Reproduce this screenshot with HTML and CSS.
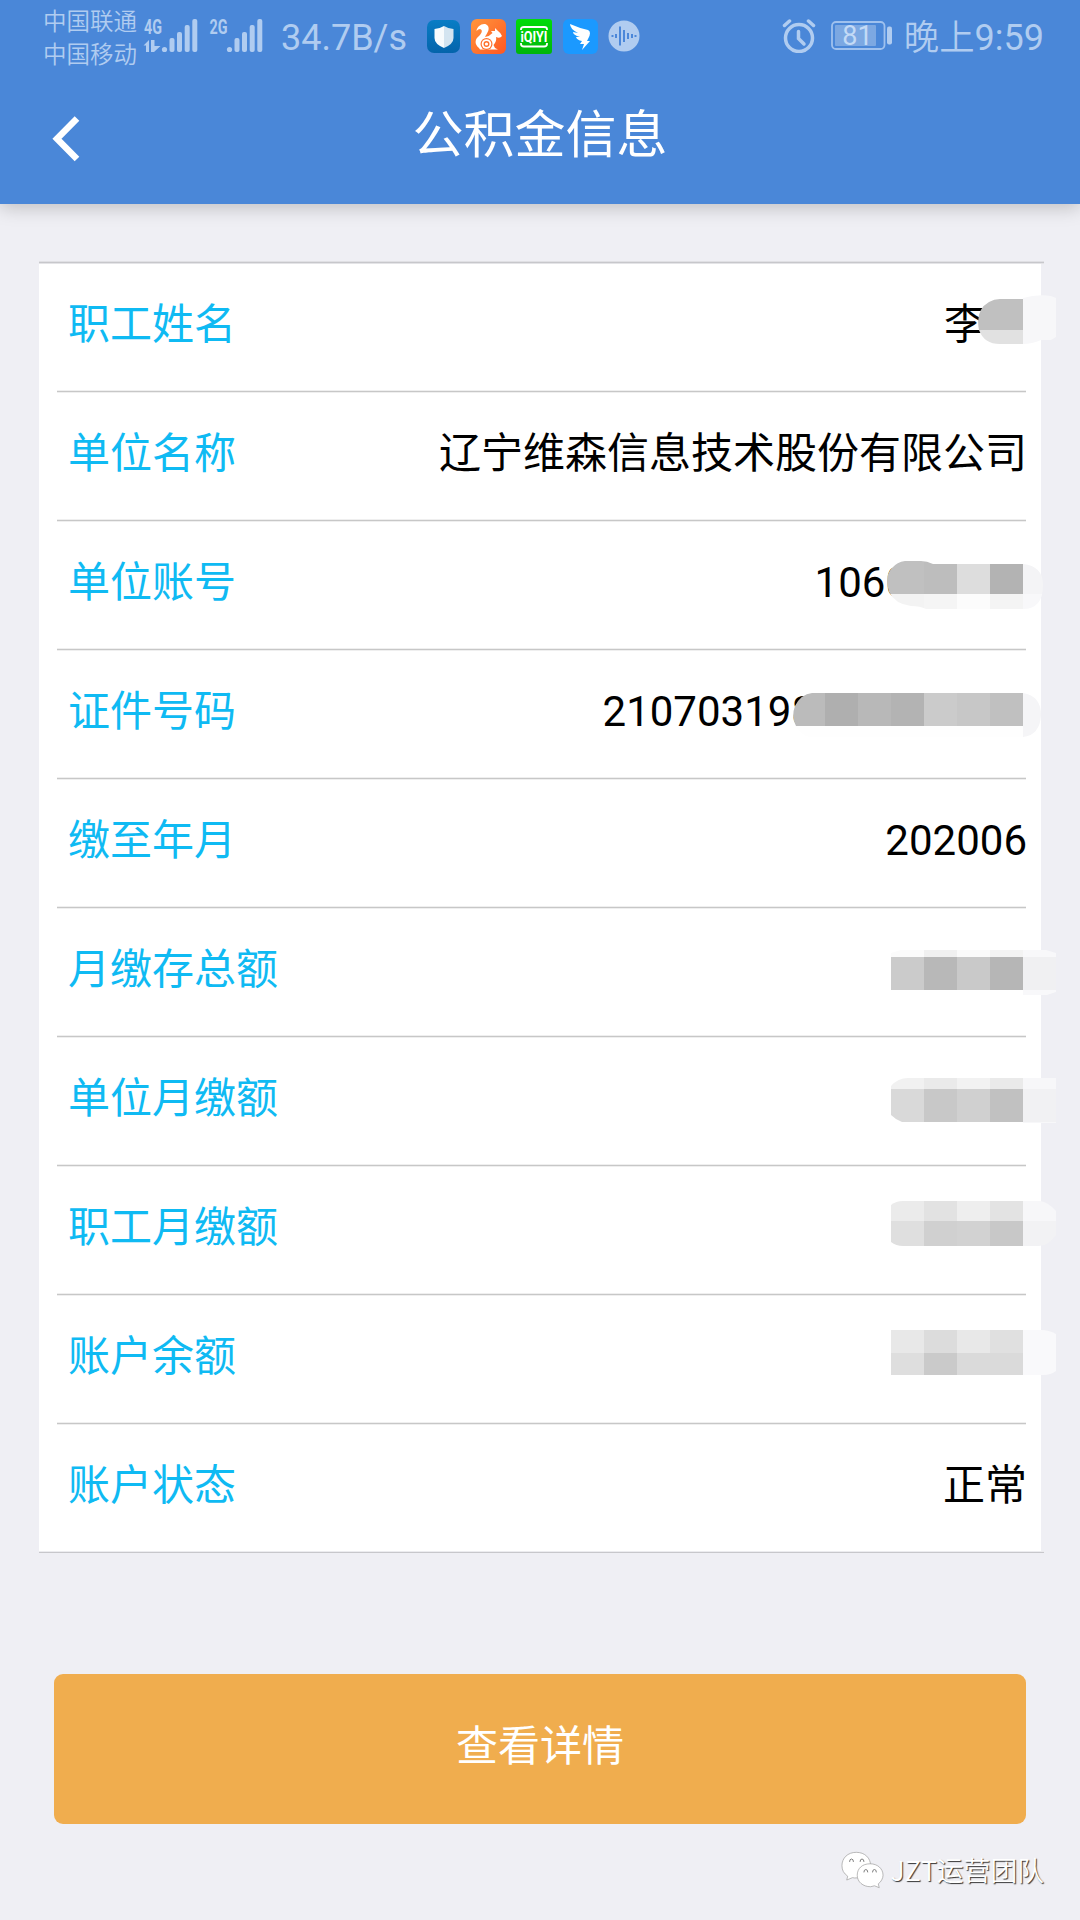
FILE: index.html
```html
<!DOCTYPE html>
<html lang="zh-CN">
<head>
<meta charset="utf-8">
<title>公积金信息</title>
<link rel="stylesheet" href="styles.css">
</head>
<body>
<header class="header">
  <div class="status">
    <div class="carriers"><span>中国联通</span><span>中国移动</span></div>
    <svg class="signal" width="120" height="48" viewBox="143 12 120 48">
      <text class="net" x="144" y="34" textLength="18" lengthAdjust="spacingAndGlyphs">4G</text>
      <text class="net" x="209.500" y="34" textLength="18" lengthAdjust="spacingAndGlyphs">2G</text>
      <path d="M143.500 45.500l5.500-5.500v12h-3v-6.500zM151 40h3.500v6h6l-6.500 6h-3z"/>
      <g>
        <circle cx="164.500" cy="49.500" r="2.600"/><rect x="169.500" y="38" width="5" height="14" rx="2"/><rect x="177" y="32" width="5" height="20" rx="2"/><rect x="184.700" y="25" width="5" height="27" rx="2"/><rect x="192.300" y="19" width="5" height="33" rx="2"/>
      </g>
      <g>
        <circle cx="229.500" cy="49.500" r="2.600"/><rect x="234.500" y="38" width="5" height="14" rx="2"/><rect x="242" y="32" width="5" height="20" rx="2"/><rect x="249.700" y="25" width="5" height="27" rx="2"/><rect x="257.300" y="19" width="5" height="33" rx="2"/>
      </g>
    </svg>
    <span class="speed">34.7B/s</span>
    <div class="apps">
      <svg width="33" height="33" viewBox="0 0 33 33">
        <defs><linearGradient id="navy" x2="0" y2="1"><stop stop-color="#087dc5"/><stop offset="1" stop-color="#0464ab"/></linearGradient></defs>
        <rect width="33" height="33" rx="7" fill="url(#navy)"/>
        <path d="M17 6q5 3 9.500 3v9q0 6-9.500 10z" fill="#d3e4f0"/><path d="M17 6q-5 3-9.500 3v9q0 6 9.500 10z" fill="#f7fbfd"/>
      </svg>
      <svg width="35" height="35" viewBox="0 0 35 35">
        <defs><linearGradient id="orange" x2="1" y2="1"><stop stop-color="#ff963c"/><stop offset="1" stop-color="#ff5722"/></linearGradient></defs>
        <rect width="35" height="35" rx="6" fill="url(#orange)"/>
        <path d="M8 29C3 25 4 20 8 17C11 14 12 11 9 10Q7 10 5.500 12C6 6 14 2.500 17 7C19 11 16 14 14 18Q19 17 21.500 14L20 12L24 12L24 9L27 12Q30 14 31 17Q29 20 25 18Q26 22 22.500 26L24 29L27 30.500H9z" fill="#fff"/>
        <circle cx="15.500" cy="25" r="6" fill="#ff712d"/><circle cx="15.500" cy="25" r="4.800" fill="#fff"/><circle cx="15.500" cy="25" r="2.300" fill="none" stroke="#ff712d" stroke-width="1.400"/>
      </svg>
      <svg width="36" height="35" viewBox="0 0 36 35">
        <defs><linearGradient id="green" x2="0" y2="1"><stop stop-color="#00dc09"/><stop offset="1" stop-color="#00b50b"/></linearGradient></defs>
        <rect width="36" height="35" rx="3" fill="url(#green)"/>
        <path d="M5 11V10Q5 8 8 8H28Q31 8 31 10V11M5 24V25Q5 27.500 8 27.500H28Q31 27.500 31 25V24" fill="none" stroke="#fff" stroke-width="1.800"/>
        <text class="video" x="4.500" y="23" textLength="27" lengthAdjust="spacingAndGlyphs">iQIYI</text>
      </svg>
      <svg width="35" height="35" viewBox="0 0 35 35">
        <rect width="35" height="35" rx="6" fill="#1b99ff"/>
        <path d="M7 5Q16 9 25 11Q29 13 25 20L24 22H27L19 31L21 25H17L19 22Q14 21 13 18L17 18Q10 16 10 13L15 14Q7 10 7 5z" fill="#fff"/>
      </svg>
      <svg width="32" height="32" viewBox="0 0 32 32">
        <circle cx="16" cy="16" r="15.500" fill="#b0ccf0"/>
        <path d="M4.500 15v2M8 14v4M12 6.500v19M16 10v12M20 13v6M24 14v4M27.500 15v2" stroke="#4b87d9" stroke-width="2"/>
      </svg>
    </div>
    <svg class="alarm" width="34" height="34" viewBox="0 0 34 34">
      <circle cx="17" cy="19" r="13.500" stroke-width="3.500"/><path d="M2.500 6.500l5-4.500M26.500 2l5 4.500" stroke-width="3.500"/><path d="M16.500 12.500v7l5.500 5.500" stroke-width="3.500"/>
    </svg>
    <svg class="battery" width="61" height="30" viewBox="0 0 61 30">
      <rect x="1" y="1" width="52.500" height="27" rx="4" fill="none" stroke="#9fc1ee" stroke-width="1.800"/>
      <rect x="4" y="4" width="41" height="21" rx="1" fill="#7ca8e2"/>
      <rect x="56" y="5.500" width="5" height="18" rx="2" fill="#b0ccf0"/>
      <text x="26.500" y="24" text-anchor="middle">81</text>
    </svg>
    <span class="time"><span class="period">晚上</span>9:59</span>
  </div>
  <div class="titlebar">
    <svg class="back" width="29" height="46" viewBox="0 0 29 46"><path d="M25 2.500L5 22.800L25 43" fill="none" stroke="#fff" stroke-width="6.500"/></svg>
    <h1 class="title">公积金信息</h1>
  </div>
</header>

<main class="content">
  <dl class="card">
    <div class="row"><dt>职工姓名</dt><dd class="name">李</dd>
      <svg class="mask mask-name" width="78" height="49" viewBox="978 295 78 49">
        <path d="M1000 299H1023V330H979Q975 310 989 302Q994 299 1000 299z" fill="#c0c0c0"/><path d="M979 330H1023V344H1000Q984 344 979 330z" fill="#e1e1e1"/>
        <path d="M1023 298Q1037 294 1051 296L1056 298V337L1051 340H1041Q1032 344 1023 344z" fill="#f7f7f9"/>
      </svg>
    </div>
    <div class="row"><dt>单位名称</dt><dd>辽宁维森信息技术股份有限公司</dd></div>
    <div class="row"><dt>单位账号</dt><dd class="account">1060</dd>
      <svg class="mask mask-account" width="156" height="48" viewBox="887 561 156 48">
        <clipPath id="account"><path d="M905 561H921Q927 561 933 564H1023Q1043 566 1043 585Q1043 609 1023 609H926Q920 606 911 606Q895 604 889 592Q884 576 892 568Q897 562 905 561z"/></clipPath>
        <g clip-path="url(#account)">
          <path fill="#c0c0c0" d="M887 561h37v33h-37z"/><path fill="#bdbdbd" d="M924 561h33v33h-33z"/><path fill="#ddd" d="M957 561h33v33h-33z"/><path fill="#b3b3b3" d="M990 561h33v33h-33z"/><path fill="#f4f4f6" d="M1023 561h20v33h-20z"/>
          <path fill="#f3f3f3" d="M887 594h37v15h-37z"/><path fill="#f5f5f5" d="M924 594h33v15h-33z"/><path fill="#fcfcfc" d="M957 594h33v15h-33z"/><path fill="#f4f4f4" d="M990 594h33v15h-33z"/><path fill="#f8f8fa" d="M1023 594h20v15h-20z"/>
        </g>
      </svg>
    </div>
    <div class="row"><dt>证件号码</dt><dd class="idno">210703198</dd>
      <svg class="mask mask-idno" width="248" height="44" viewBox="793 693 248 44">
        <clipPath id="idno"><path d="M812 693H1023Q1041 696 1041 715Q1040 735 1023 737H810Q800 735 796 726Q791 717 795 706Q801 694 812 693z"/></clipPath>
        <g clip-path="url(#idno)">
          <path fill="#fefefe" d="M793 726h230v11h-230z"/>
          <path fill="#bbb" d="M793 693h32v33h-32z"/><path fill="#afafaf" d="M825 693h33v33h-33z"/><path fill="#b8b8b8" d="M858 693h33v33h-33z"/><path fill="#b3b3b3" d="M891 693h33v33h-33z"/><path fill="#cbcbcb" d="M924 693h33v33h-33z"/><path fill="#c7c7c7" d="M957 693h33v33h-33z"/><path fill="#c0c0c0" d="M990 693h33v33h-33z"/><path fill="#f5f5f7" d="M1023 693h18v44h-18z"/>
        </g>
      </svg>
    </div>
    <div class="row"><dt>缴至年月</dt><dd>202006</dd></div>
    <div class="row"><dt>月缴存总额</dt>
      <svg class="mask mask-total" width="165" height="45" viewBox="0 0 165 45">
        <clipPath id="total"><path d="M0 3L10 0H155L165 3V42L156 45H132V40H0z"/></clipPath>
        <g clip-path="url(#total)">
          <path fill="#fbfbfb" d="M0 0h33v7H0z"/><path fill="#f0f0f0" d="M33 0h33v7H33z"/><path fill="#fafafa" d="M66 0h33v7H66z"/><path fill="#f3f3f3" d="M99 0h33v7H99z"/><path fill="#f8f8fa" d="M132 0h33v45h-33z"/>
          <path fill="#cbcbcb" d="M0 7h33v33H0z"/><path fill="#b8b8b8" d="M33 7h33v33H33z"/><path fill="#c9c9c9" d="M66 7h33v33H66z"/><path fill="#b6b6b6" d="M99 7h33v33H99z"/><path fill="#f0f0f2" d="M132 7h33v33h-33z"/>
        </g>
      </svg>
    </div>
    <div class="row"><dt>单位月缴额</dt>
      <svg class="mask mask-company" width="165" height="45" viewBox="0 0 165 45">
        <clipPath id="company"><path d="M0 8Q7 0 17 0H165V45H132V44H11Q5 42 0 37z"/></clipPath>
        <g clip-path="url(#company)">
          <path fill="#f1f1f1" d="M0 0h33v11H0z"/><path fill="#eaeaea" d="M33 0h33v11H33z"/><path fill="#f2f2f2" d="M66 0h33v11H66z"/><path fill="#eaeaea" d="M99 0h33v11H99z"/><path fill="#f7f7f9" d="M132 0h33v45h-33z"/>
          <path fill="#d9d9d9" d="M0 11h33v33H0z"/><path fill="#c8c8c8" d="M33 11h33v33H33z"/><path fill="#d0d0d0" d="M66 11h33v33H66z"/><path fill="#c1c1c1" d="M99 11h33v33H99z"/><path fill="#f1f1f3" d="M132 11h33v33h-33z"/>
        </g>
      </svg>
    </div>
    <div class="row"><dt>职工月缴额</dt>
      <svg class="mask mask-staff" width="165" height="45" viewBox="0 0 165 45">
        <clipPath id="staff"><path d="M0 4Q5 0 12 0H149Q157 1 165 10V34Q157 45 148 45H12Q5 45 0 41z"/></clipPath>
        <g clip-path="url(#staff)">
          <path fill="#ebebeb" d="M0 0h33v20H0z"/><path fill="#e2e2e2" d="M33 0h33v20H33z"/><path fill="#eee" d="M66 0h33v20H66z"/><path fill="#e3e3e3" d="M99 0h33v20H99z"/><path fill="#f7f7f9" d="M132 0h33v20h-33z"/>
          <path fill="#dfdfdf" d="M0 20h33v25H0z"/><path fill="#d0d0d0" d="M33 20h33v25H33z"/><path fill="#d2d2d2" d="M66 20h33v25H66z"/><path fill="#c8c8c8" d="M99 20h33v25H99z"/><path fill="#f2f2f4" d="M132 20h33v25h-33z"/>
        </g>
      </svg>
    </div>
    <div class="row"><dt>账户余额</dt>
      <svg class="mask mask-balance" width="165" height="45" viewBox="0 0 165 45">
        <clipPath id="balance"><path d="M0 0H150Q158 0 165 4V41Q160 45 152 45H0z"/></clipPath>
        <g clip-path="url(#balance)">
          <path fill="#e8e8e8" d="M0 0h33v23H0z"/><path fill="#dcdcdc" d="M33 0h33v23H33z"/><path fill="#e8e8e8" d="M66 0h33v23H66z"/><path fill="#e0e0e0" d="M99 0h33v23H99z"/><path fill="#f9f9fb" d="M132 0h33v45h-33z"/>
          <path fill="#dedede" d="M0 23h33v22H0z"/><path fill="#cacaca" d="M33 23h33v22H33z"/><path fill="#dadada" d="M66 23h66v22H66z"/>
        </g>
      </svg>
    </div>
    <div class="row"><dt>账户状态</dt><dd>正常</dd></div>
  </dl>
  <button class="detail" type="button">查看详情</button>
</main>

<footer class="watermark">
  <svg width="43" height="38" viewBox="0 0 45 39">
    <g fill="#fff" stroke="#999" stroke-width=".7">
      <path d="M16 1C7 1 1 7 1 15C1 20 3 23 7 26L6 30L12 27.500C17 29 31 26 31 15C31 7 25 1 16 1z"/>
      <path d="M30.500 13C22 13 17 18 17 25C17 32 23 37 31 37L35 36L40 38L39 34C42 32 44 28 44 25C44 18 38 13 30.500 13z"/>
    </g>
    <path d="M9 11q0-3 2-3t2 3M20 11q0-3 2-3t2 3M24 22q0-3 2-3t2 3M33 22q0-3 2-3t2 3" fill="none" stroke="#777" stroke-width="1"/>
  </svg>
  <span>JZT运营团队</span>
</footer>
</body>
</html>
```
FILE: styles.css
```css
* { box-sizing: border-box; }
body {
  margin: 0;
  height: 1920px;
  background: #efeff4;
  font-family: Roboto, "Noto Sans CJK SC", sans-serif;
  display: flex;
  flex-direction: column;
  overflow: hidden;
}

.header {
  flex: none;
  height: 204px;
  background: #4a87d8;
  box-shadow: 0 3px 18px rgba(0, 0, 0, .22);
}
.status {
  height: 72px;
  padding: 0 36px 0 43px;
  display: flex;
  align-items: center;
  color: #b0ccf0;
  font-weight: 400;
  white-space: nowrap;
}
.carriers {
  width: 100px;
  display: flex;
  flex-direction: column;
  font-size: 23.500px;
  line-height: 33px;
  font-weight: 350;
  padding-top: 5px;
}
.signal { fill: #b0ccf0; overflow: visible; }
.net { font: 700 20px Roboto, sans-serif; }
.speed { width: 144px; margin-left: 18px; font-size: 36px; line-height: 72px; padding-top: 3px; }
.apps { width: 213px; display: flex; justify-content: space-between; align-items: center; margin-left: 2px; }
.video { font: 700 15px Roboto, sans-serif; fill: #fff; }
.alarm { margin-left: auto; fill: none; stroke: #b0ccf0; stroke-linecap: round; }
.battery { margin-left: 15px; }
.battery text { font: 400 27px Roboto, sans-serif; fill: #c3daf6; }
.time { margin-left: 12px; font-size: 36px; line-height: 72px; padding-top: 3px; }
.period { font-size: 35.400px; font-weight: 350; }

.titlebar {
  height: 132px;
  display: grid;
  grid-template-columns: 29px 1fr 29px;
  align-items: start;
  padding: 0 52px;
}
.back { margin-top: 44px; }
.title {
  margin: 28px 0 0;
  color: #fff;
  font-size: 51px;
  line-height: 72px;
  font-weight: 400;
  text-align: center;
}

.content { padding: 57px 36px 0 39px; }
.card {
  margin: 0;
  width: 1005px;
  padding: 3px 18px 0;
  background:
    linear-gradient(#e0e0e4 1px, #c7c7cb 1px 2px, #e4e4e7 2px) 0 0 / 100% 3px no-repeat,
    linear-gradient(#ececef 1px, #c7c7cb 1px 2px, #efeff4 2px) 0 100% / 100% 3px no-repeat,
    linear-gradient(#fff, #fff) 0 0 / 1002px 100% no-repeat;
}
.row {
  position: relative;
  height: 129px;
  padding: 0 0 7px 11px;
  display: flex;
  align-items: center;
  justify-content: space-between;
  font-size: 42px;
  line-height: 60px;
  background: linear-gradient(#efefef 1px, #c7c7c7 1px 2px, #efefef 2px) 0 100% / 100% 3px no-repeat;
}
.row:last-child { background: none; }
.row dt { color: #0fbaf3; }
.row dd { margin: 0 -1px 0 0; color: #000; }
.row .name { padding-right: 41px; }
.row .account { padding-right: 118px; }
.row .idno { padding-right: 212px; }

/* Mosaic blocks laid over private values */
.mask { position: absolute; }
.mask-name { top: 31px; right: -30px; }
.mask-account { top: 39px; right: -17px; }
.mask-idno { top: 42px; right: -15px; }
.mask-total { top: 41px; right: -30px; }
.mask-company { top: 40px; right: -30px; }
.mask-staff { top: 34px; right: -30px; }
.mask-balance { top: 34px; right: -30px; }

.detail {
  display: block;
  width: 972px;
  height: 150px;
  margin: 120px 0 0 15px;
  padding: 0 0 4px;
  border: 0;
  border-radius: 9px;
  background: #f0ad4e;
  color: #fff;
  font: 400 42px/60px Roboto, "Noto Sans CJK SC", sans-serif;
}

.watermark {
  display: flex;
  justify-content: flex-end;
  align-items: center;
  gap: 7px;
  height: 46px;
  margin-top: 23px;
  padding-right: 36px;
  color: #fff;
  font: 350 26.800px/40px "Noto Sans CJK SC", sans-serif;
  text-shadow: 1px 1px 1px #333;
}
```
